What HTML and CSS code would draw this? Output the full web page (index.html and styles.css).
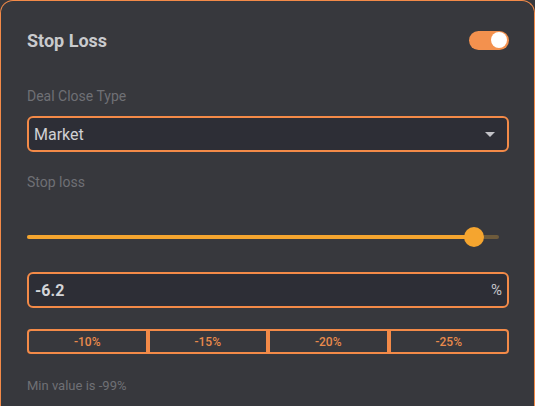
FILE: index.html
```html
<!DOCTYPE html>
<html lang="en">
<head>
    <meta charset="UTF-8">
    <meta name="viewport" content="width=device-width, initial-scale=1.0">
    <title>Stop Loss</title>
    <link rel="stylesheet" href="styles.css">
</head>
<body>

    <div class="card">
        <div class="card-header">
            <h2 class="card-title">Stop Loss</h2>
            <div class="toggle on"><span class="toggle-knob"></span></div>
        </div>

        <div class="field-label label-close">Deal Close Type</div>
        <div class="select-box">
            <span>Market</span>
            <span class="select-arrow"></span>
        </div>

        <div class="field-label label-loss">Stop loss</div>
        <div class="slider">
            <div class="slider-track">
                <div class="slider-fill" style="width: 94.7%;"></div>
            </div>
            <div class="slider-thumb" style="left: 94.7%;"></div>
        </div>

        <div class="value-box">
            <span class="value-text">-6.2</span>
            <span class="value-unit">%</span>
        </div>

        <!-- Quick presets -->
        <div class="preset-group">
            <button class="preset-btn">-10%</button>
            <button class="preset-btn">-15%</button>
            <button class="preset-btn">-20%</button>
            <button class="preset-btn">-25%</button>
        </div>

        <p class="hint">Min value is -99%</p>
    </div>

</body>
</html>
```

FILE: styles.css
```css
body {
    margin: 0;
    background-color: #37383d;
    font-family: Roboto, "Liberation Sans", Arial, sans-serif;
}

.card {
    box-sizing: border-box;
    width: 535px;
    height: 406px;
    padding: 29px 25px 0 26px;
    background-color: #37383d;
    border: 1px solid #f38a48;
    border-bottom: none;
    border-radius: 13px 13px 0 0;
}

/* Header */
.card-header {
    display: flex;
    justify-content: space-between;
    align-items: center;
    height: 20px;
}
.card-title {
    margin: 0;
    font-size: 18px;
    font-weight: 700;
    color: #c9cacd;
}
.toggle {
    box-sizing: border-box;
    width: 40px;
    height: 19px;
    padding: 1px 2px;
    border-radius: 10px;
    background-color: #f3914e;
    display: flex;
    justify-content: flex-end;
    align-items: center;
}
.toggle-knob {
    width: 16px;
    height: 16px;
    border-radius: 50%;
    background-color: #ffffff;
}

/* Labels */
.field-label {
    font-size: 14px;
    line-height: 16px;
    color: #6f7075;
}
.label-close {
    margin-top: 38px;
}
.label-loss {
    margin-top: 22px;
}

/* Select */
.select-box {
    box-sizing: border-box;
    height: 36px;
    margin-top: 12px;
    padding: 0 12px 0 5px;
    display: flex;
    justify-content: space-between;
    align-items: center;
    background-color: #2d2e36;
    border: 2px solid #f38a48;
    border-radius: 6px;
    font-size: 16px;
    color: #d0d0d4;
}
.select-arrow {
    width: 0;
    height: 0;
    border-left: 5px solid transparent;
    border-right: 5px solid transparent;
    border-top: 5px solid #c2c2c7;
}

/* Slider */
.slider {
    position: relative;
    height: 20px;
    margin-top: 37px;
    margin-right: 10px;
    display: flex;
    align-items: center;
}
.slider-track {
    width: 100%;
    height: 4px;
    border-radius: 2px;
    background-color: #6e5b3c;
}
.slider-fill {
    height: 100%;
    border-radius: 2px;
    background-color: #f5a52f;
}
.slider-thumb {
    position: absolute;
    top: 0;
    width: 20px;
    height: 20px;
    margin-left: -10px;
    border-radius: 50%;
    background-color: #f5a52f;
}

/* Value input */
.value-box {
    box-sizing: border-box;
    height: 36px;
    margin-top: 25px;
    padding: 0 5px 0 6px;
    display: flex;
    justify-content: space-between;
    align-items: center;
    background-color: #2d2e36;
    border: 2px solid #f38a48;
    border-radius: 6px;
}
.value-text {
    font-size: 16px;
    font-weight: 700;
    color: #d3d4d8;
}
.value-unit {
    font-size: 15px;
    color: #c4c5c9;
}

/* Preset buttons */
.preset-group {
    display: flex;
    margin-top: 21px;
}
.preset-btn {
    flex: 1;
    height: 25px;
    margin: 0;
    padding: 0;
    background-color: #37383d;
    border: 2px solid #f38a48;
    border-radius: 0;
    font-family: Roboto, "Liberation Sans", Arial, sans-serif;
    font-size: 12px;
    font-weight: 500;
    color: #e98a4c;
    cursor: pointer;
}
.preset-btn:first-child {
    border-radius: 4px 0 0 4px;
}
.preset-btn:last-child {
    border-radius: 0 4px 4px 0;
}

.hint {
    margin: 24px 0 0;
    font-size: 13px;
    line-height: 15px;
    color: #6f7075;
}
```
